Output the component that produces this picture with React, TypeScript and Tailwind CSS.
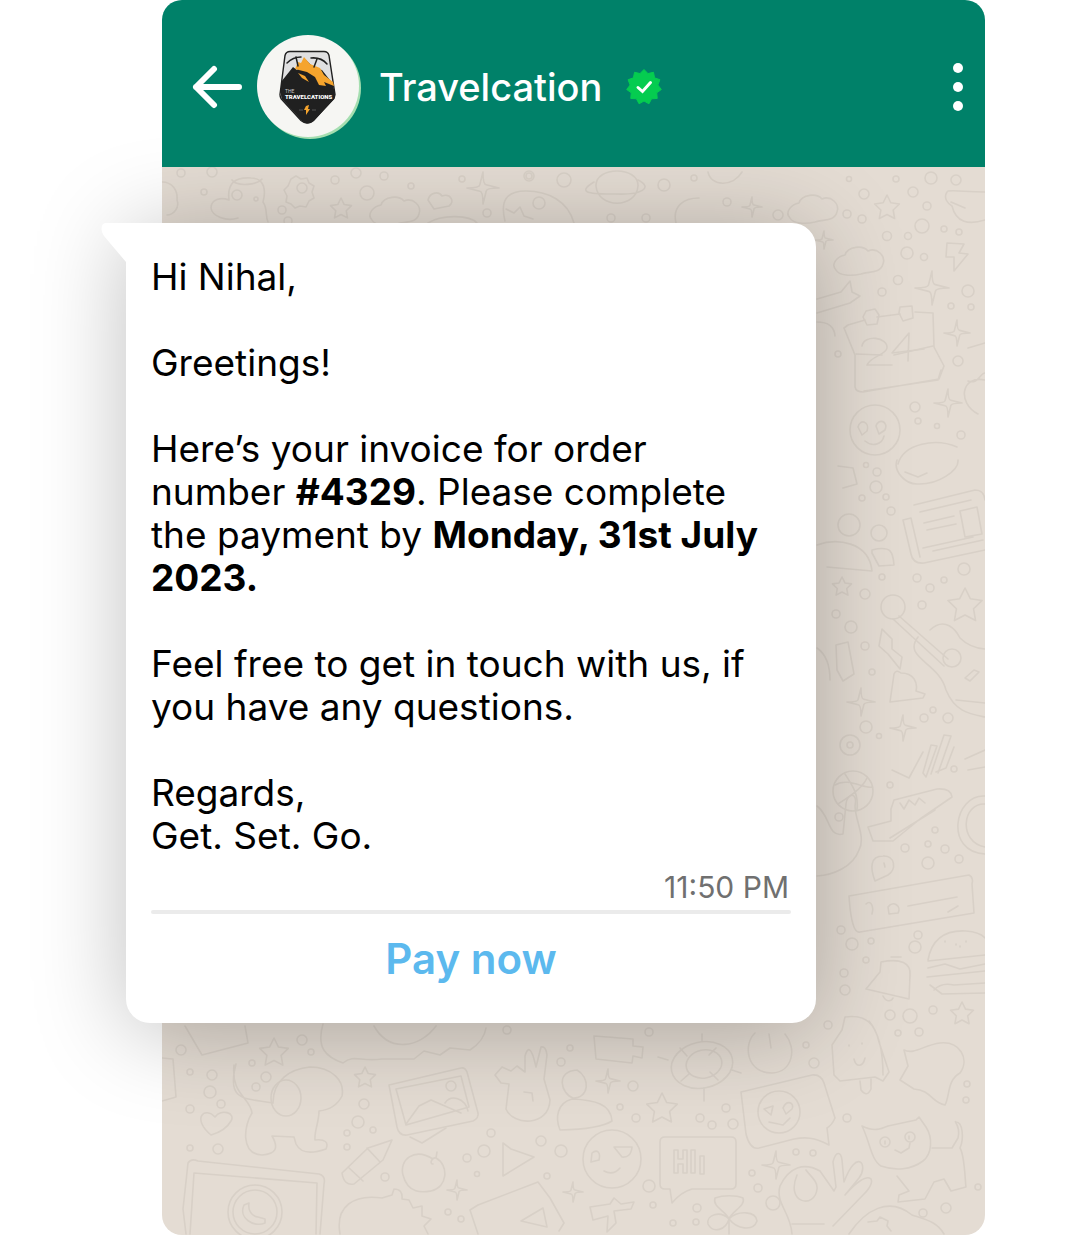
import type { ReactNode } from "react";

function Star({ x, y, r = 12 }: { x: number; y: number; r?: number }) {
  const points = Array.from({ length: 10 }, (_, i) => {
    const a = (Math.PI / 5) * i - Math.PI / 2;
    const d = i % 2 ? r * 0.5 : r;
    return `${x + d * Math.cos(a)},${y + d * Math.sin(a)}`;
  });
  return <polygon points={points.join(" ")} />;
}

function Sparkle({ x, y, r = 14 }: { x: number; y: number; r?: number }) {
  const n = r / 5;
  return (
    <path
      d={`M${x} ${y - r}Q${x} ${y - n} ${x + n} ${y - n}L${x + r} ${y}Q${x + n} ${y} ${x + n} ${y + n}L${x} ${y + r}Q${x} ${y + n} ${x - n} ${y + n}L${x - r} ${y}Q${x - n} ${y} ${x - n} ${y - n}Z`}
    />
  );
}

function Cloud({ x, y }: { x: number; y: number }) {
  return (
    <path d={`M${x} ${y + 18}c-6-6 2-14 9-15c3-9 18-10 23-4c9-4 18 5 15 13c-3 10-14 7-22 10c-9 2-22 2-25-4Z`} />
  );
}

const dots = [
  [849, 179, 2.5], [896, 179, 3], [931, 178, 6], [956, 180, 5], [864, 194, 5], [913, 192, 5], [927, 206, 4], [847, 214, 4],
  [862, 219, 4], [922, 226, 7], [944, 229, 3], [959, 232, 3], [887, 236, 4.5], [908, 236, 3.5], [907, 253, 6], [924, 257, 3.5],
  [898, 280, 4.5], [882, 292, 4], [968, 291, 6], [951, 306, 3], [971, 307, 3], [958, 361, 5], [838, 354, 3], [915, 407, 5],
  [918, 421, 3], [937, 426, 2.5], [961, 435, 4], [866, 465, 2.5], [877, 472, 4], [876, 487, 6], [862, 498, 3], [886, 497, 3],
  [891, 511, 4], [849, 525, 11], [879, 533, 8], [882, 577, 3], [917, 578, 4], [930, 588, 4], [944, 580, 3], [964, 569, 6],
  [922, 605, 4], [836, 614, 4], [851, 627, 6], [865, 594, 5], [865, 646, 4], [872, 672, 3], [933, 710, 3], [924, 718, 4],
  [948, 718, 5], [866, 727, 6], [879, 736, 2.5], [890, 785, 3], [954, 769, 3], [839, 817, 4], [935, 830, 3], [928, 844, 3],
  [905, 848, 4], [945, 849, 4], [928, 863, 6], [959, 859, 4], [918, 935, 4], [841, 930, 4], [852, 944, 6], [871, 941, 3],
  [915, 947, 6], [866, 960, 3], [844, 973, 4], [845, 990, 5], [890, 1015, 5], [910, 1016, 7], [933, 1010, 4], [898, 1033, 3],
  [919, 1032, 4], [181, 1050, 5], [302, 1040, 5], [311, 1052, 3], [190, 1072, 3], [212, 1075, 5], [252, 1063, 3], [266, 1077, 5],
  [256, 1087, 4], [210, 1092, 6], [221, 1104, 4], [190, 1109, 4], [190, 1148, 3], [218, 1149, 5], [347, 1133, 3], [358, 1122, 6],
  [364, 1104, 5], [373, 1130, 3], [347, 1147, 3], [385, 1177, 4], [467, 1158, 4], [484, 1151, 6], [491, 1133, 4], [541, 1141, 5],
  [561, 1151, 6], [477, 1174, 2.5], [547, 1176, 3], [448, 1212, 3], [461, 1219, 3], [507, 1030, 4], [561, 1062, 4], [570, 1048, 3],
  [649, 1032, 4], [633, 1086, 5], [620, 1107, 3], [636, 1118, 4], [700, 1118, 4], [712, 1125, 4], [726, 1108, 4], [733, 1124, 5],
  [806, 1045, 3], [814, 1063, 5], [828, 1025, 4], [847, 1118, 4], [796, 1152, 3], [813, 1153, 3], [752, 1173, 3], [758, 1188, 4],
  [773, 1203, 7], [649, 1186, 6], [653, 1205, 3], [697, 1208, 4], [673, 1223, 3], [696, 1222, 3], [946, 1208, 5], [923, 1213, 4],
  [967, 1084, 3], [966, 1100, 3], [978, 1187, 3], [181, 173, 4], [212, 172, 5], [204, 192, 3], [335, 180, 4], [367, 193, 7],
  [282, 210, 4], [288, 221, 4], [356, 173, 5], [384, 176, 4], [411, 186, 3], [462, 179, 3], [529, 176, 5], [564, 180, 7],
  [487, 213, 4], [529, 176, 3], [664, 185, 6], [694, 178, 3], [611, 218, 4], [646, 218, 4], [727, 202, 4], [778, 215, 5],
];

function Doodles() {
  return (
    <svg
      aria-hidden="true"
      className="absolute inset-0 h-full w-full"
      viewBox="162 167 823 1069"
      preserveAspectRatio="xMidYMin slice"
      fill="none"
      stroke="#d8d0c7"
      strokeWidth="1.6"
      strokeLinecap="round"
      strokeLinejoin="round"
    >
      {dots.map(([x, y, r], i) => (
        <circle key={i} cx={x} cy={y} r={r} />
      ))}

      <Star x={887} y={208} r={13} />
      <Star x={842} y={587} r={10} />
      <Star x={965} y={606} r={18} />
      <Star x={962} y={1014} r={12} />
      <Star x={274} y={1053} r={15} />
      <Star x={365} y={1078} r={11} />
      <Star x={662} y={1109} r={16} />
      <Star x={341} y={209} r={11} />
      <Sparkle x={932} y={288} r={17} />
      <Sparkle x={957} y={333} r={13} />
      <Sparkle x={948} y={403} r={14} />
      <Sparkle x={861} y={702} r={14} />
      <Sparkle x={903} y={728} r={13} />
      <Sparkle x={457} y={1190} r={10} />
      <Sparkle x={573} y={1192} r={10} />
      <Sparkle x={776} y={1165} r={14} />
      <Sparkle x={608} y={1081} r={12} />
      <Sparkle x={483} y={188} r={16} />
      <Sparkle x={752} y={207} r={10} />
      <Sparkle x={824} y={240} r={9} />
      <Cloud x={836} y={252} />
      <Cloud x={790} y={200} />
      <Cloud x={372} y={202} />

      {/* face, gear, planet and pizza along the top */}
      <path d="M238 218c-12 4-26-2-27-10c0-9 10-11 18-8c-2-16 5-23 22-22c14 0 15 13 12 24c5 7 2 14 5 20M232 180c5 7 25 5 30-1" />
      <circle cx="237" cy="195" r="5" />
      <circle cx="256" cy="199" r="2" />
      <path d="m291 179 5-3 5 3 6-1 2 5 5 3-2 6 2 6-5 3-3 6-6-1-5 2-4-4-5-2 1-6-3-6 4-4Z" />
      <circle cx="302" cy="188" r="5" />
      <path d="M162 182c10 0 16 8 15 18 3 8-4 15-10 15M428 200c2-8 11-9 14-4c9-3 13 6 7 10l-15 3ZM505 221c-5-20 1-30 21-30c22 0 42 10 48 32M506 209l8 4 6-6 4 9 9 3" />
      <circle cx="539" cy="203" r="6" />
      <path d="M596 186c-1-20 43-20 42 0c-2 23-40 23-42 0M594 182c-20 12 0 12 22 12c25 1 38-6 22-14M676 223c-4-17 8-25 23-25M708 172c3 15 25 15 34 0M428 223c14-9 42-8 49 0" />
      <path d="M947 192c-4 6 1 12 5 14c4 17 17 19 33 14M948 191c9-1 18 1 37 1M951 202l14 6M947 243l17 1-5 9 9 1-14 17 0-14-8 0Z" />

      {/* desk calendar */}
      <path d="M865 320l-17 5-4 3 11 27v32q1 5 8 5l76-13 5-13-10-19-1-34-18-1M877 317l23-3M864 391l74-11 3-10" />
      <path d="M866 311l9-2 4 6-2 9-10 1-4-8ZM900 307l12-1 1 12-10 3-4-8ZM856 354l26 1m12 0 39-9" />
      <path d="M862 346c2-12 26-9 25 2-1 7-16 8-20 17h25M892 353l17-20-1 28M892 353l32-4" />
      <circle cx="875" cy="430" r="25" />
      <path d="M858 427c2-9 12-5 9 4l-5 4ZM876 426c2-8 13-5 9 4l-6 4ZM865 441c7 6 17 4 19-5M985 380c-24-5-28 23-7 34M898 464c6-21 38-26 59-17M968 348l17-5m-17 38c10 4 12-8 17-8M817 299l24-7 9-11 2 11 8 4-10 7-33 10M817 322q17 0 18 14" />

      {/* newspaper */}
      <path d="M914 505l61-15q9 0 10 10m0 50-61 13q-11 1-13-9l-8-34 8-2 9 39M920 512l51-12m-47 23 30-7m-27 14 29-6m-23 27 50-11M923 548l50-11M960 511l17-4 5 27-17 3Z" />
      <path d="M897 460c-4 11 8 24 20 24c22 1 42-14 41-24M905 472l13 5 9-4M817 545c19-7 52-4 55 26l-45-4M872 550c20-5 21 3 22 15l-15 1-7-13ZM838 466l15 2 4 16-14 4" />

      {/* guitar */}
      <circle cx="893" cy="607" r="12" />
      <path d="M899 616l49 43m-55-40 51 47M930 630c15-14 26 0 30 8q10 10 25 11M918 637c-16 21 21 25 28 53c9 22 24 24 39 27M956 700l29 3" />
      <circle cx="952" cy="658" r="9" />
      <path d="M965 678l9-8 5 2-9 9Z" />
      <path d="m882 629 10 10 0 10 10 8-2 12-12-15-9-8ZM836 645l12-3 6 32-11 7-6-11ZM890 702l4-28q2-5 7-1c13 0 17 10 15 18l9 3-2 4ZM817 648q13 9 13 32M923 773l8-28 6 1-11 31ZM938 773l13-37-7-1-13 39" />
      <circle cx="850" cy="745" r="10" />
      <circle cx="850" cy="745" r="3" />
      <path d="M892 770l17 8 14-26m13 20 10-4 8-21M965 759l20-9m-17 20 17-3" />

      {/* ball, knife and clock */}
      <circle cx="853" cy="791" r="20" />
      <path d="M835 785c12-8 30 4 37 2M845 774c7 11 14 20 12 36M867 778c-5 11-20 20-29 26M891 809l3-9 43-11q14-1 15 8l-32 22-27 22-20 0-5-14 23-6ZM900 803l4 6 5-9 6 5 4-7 6 5M890 838l45-28" />
      <path d="M985 796c-31-2-41 56 0 58M985 804c-23-1-27 38 0 43M817 806c13 9 11 32 26 28l3-30c1-11 12-13 9 2c0 14 11 31 4 44c-6 17-26 25-42 26" />
      <path d="M875 881c-5-13-5-25 8-25c12-1 14 14 5 19ZM884 863l1 4M849 896l120-21q5 3 3 9l2 29-114 19q-7 2-10-24ZM866 904c5-5 8 3 6 10m16-7c5-7 14-1 10 6l-9 1ZM908 906l49-9M948 912l10-6" />

      {/* burger and bell */}
      <path d="M928 960c4-22 18-30 38-29q14 1 19 7M928 961l57-6M928 968l17-4 15 5 25-5M927 977l58-6M930 985l12 9 43-1M934 990q7-8 20-5l31-2M945 941v1m11 2v1m10-4v1m-6 4v1" />
      <path d="m866 989 14-17 1-10c20-4 30 1 29 13l-1 24ZM883 996c3 6 8 6 10 2M891 957h10" />

      {/* ice cream, ghost, cat and hand */}
      <path d="m834 1075-2-30 10-15 3-13c22-3 30 8 34 25l10 30-6 9-8-4-35 4ZM869 1021c13 15 14 40 14 54M860 1081l1 9q6 8 10-1l0-10M854 1059c2 9 9 8 11-1M849 1045v1m13-3v1M904 1050c10 5 20-5 36-7c20-2 30 16 20 30c-13 7-10 23-15 32c-13-2-14-15-31-16l-14-9 8-14Z" />
      <path d="M862 1126c12 6 19 3 26 0l28-6 3-3 7 10c7 11 6 27-3 34c-12 9-28 10-42 5c-10-6-11-24-19-40ZM932 1148h20l6-10c3-12-5-18-2-16c7 0 8 17 4 26c5 8 5 34 6 39l-15 4-7-12-10 3-9 17-27 3 1-7 10-4-12-15M885 1141v3m24-8v3m-14 11 6 3 8-5 1-5" />
      <circle cx="885" cy="1142" r="5" />
      <circle cx="910" cy="1137" r="5" />
      <path d="M792 1234c-1-21-17-31-12-48c9-19 24-24 40-15l14 20 2-4-3-25c3-12 8-10 9-2l2 22c13-35 25-17 15-4l-14 17c24-28 35-17 19-1l-31 32M792 1224h32M797 1175c-12 29 18 34 20 14c1-8-7-13-11-19M849 1234c16-24 40-38 63-19c15 5 25 7 32 19M868 1222l9-1 3-4 8 4-1 5 4 5" />

      {/* chat bubbles, life ring and emoji */}
      <path d="M741 1092l71-17q9-1 12 8l11 35q-3 7-8 10l2 17c-15-8-24-8-35-6l-35 9q-9 2-13-14Z" />
      <circle cx="779" cy="1112" r="21" />
      <path d="M764 1109l9-3-2 9ZM783 1108c4-9 12-5 9 1l-6 5ZM769 1122l14 3 7-7" />
      <path d="M665 1137h66q5 0 5 5v42q0 5-5 5h-39q-11 3-20 14l-2-14h-5q-5 0-5-5v-42q0-5 5-5Z" />
      <path d="M674 1150v23h4v-9h5v9h4v-23h-4v9h-5v-9ZM691 1150h4v23h-4ZM700 1156h4v18h-4Z" />
      <circle cx="612" cy="1159" r="29" />
      <path d="M592 1153c5-4 9-1 7 7l-8 2ZM614 1147l18 0q-1 11-10 10ZM604 1171q9 5 16-3" />
      <ellipse cx="702" cy="1065" rx="31" ry="23" transform="rotate(-12 702 1065)" />
      <ellipse cx="704" cy="1064" rx="18" ry="14" transform="rotate(-12 704 1064)" />
      <path d="M702 1041v-7m2 54v13m-36-41-10-3m74 13 9 3M680 1048l7 8m29-8-7 7m-28 26 8-7m29 6-8-8M594 1036l39 3v7l10 1-1 11-9-2-1 7-36-4Z" />
      <path d="M755 1033c-12 11-9 40 17 40c21-1 25-25 13-39M769 1034l2 14M590 1207l20-3 4-6 7 6 13-2-3 7-17 2 2 12-9 9 1-16-15 4Z" />
      <path d="M729 1219c-3-8-17-12-14-21c8-3 21-3 28 0c3 8-11 13-14 21c-9-9-23-4-21 5c5 10 18 6 21-5c9-9 27-8 28 2c-4 11-20 8-28-2v15" />

      {/* dog, heart and laptop */}
      <path d="M236 1064c-10 38 9 34 37 39c0-23 17-34 37-36c22 0 35 14 32 29c-5 10-14 14-23 15c0 11-5 21-4 29c10-1 14 2 11 9c-17 6-26 3-30-5l-2-7-22-1c7 12 4 18-10 19c-22-1-18-30-10-42c-2-16-21-18-18-48" />
      <ellipse cx="286" cy="1098" rx="15" ry="18" />
      <path d="M211 1135c-20-17-6-29 4-18c6-9 21-4 16 4c-5 9-13 12-20 14ZM186 1234l-3-25 5-46q3-5 10-2l121 13q7 2 5 10l-4 50M190 1234l4-61 123 10-1 51" />
      <circle cx="255" cy="1212" r="27" />
      <circle cx="255" cy="1212" r="22" />
      <path d="M244 1205c-6 13 10 23 21 18v-4l-7-2c-8-1-10-9-9-14ZM162 1058l11 1 3 38-14 4M185 1026l17 29 46-12-3-17M323 1024c-7 24 3 33 20 39c11-9 17-1 39-4h32l10-8 16 4 10-7 20 2q14-9 16-22M374 1026c15 27 46 22 62 0" />

      {/* picture frame, pencil, apple and dinosaur */}
      <path d="M389 1085l72-17q4-1 6 4l11 41q1 5-5 8l-66 14q-8 1-10-8ZM396 1089l65-13 8 31-63 18ZM406 1124l13-18 12-6 30 13M445 1103c6-9 20-5 23 8M342 1173l26-25 24-8-9 20-29 24q-10 2-12-11ZM348 1167l15 14m4-33 13 14" />
      <circle cx="451" cy="1086" r="5" />
      <path d="M433 1159c-19-12-34 1-30 16c5 20 21 17 28 16c17-4 18-26 5-33c-4-1-7 6-3 6M436 1158l1-6M410 1137l12 6 24-15M340 1234c-5-28 14-40 42-36l10-3 2-6q9 0 8 10l7 1 4 8 9-2 0 10 9 3-7 7 4 8" />
      <path d="m503 1143 0 33 31-19-23-8ZM478 1234l-8-24 8-5 60-23 12 16 14 25-5 8M521 1221l22-13 4 19ZM509 1084l-8-1-6-8 7-8 9 4 6-5 8 6 0-16q4-14 9 3l2 8 5-20q5-1 6 8l-3 24 6 21c-1 27-37 26-44 9ZM524 1092l8 1 1 8" />
      <path d="M577 1070c-22 1-16 24-4 28c17 0 17-21 4-28M572 1099c-15 4-17 19-12 31q40-1 52-9c-1-17-17-21-40-22" />
    </svg>
  );
}

function TravelLogo() {
  return (
    <svg role="img" aria-label="The Travelcations" className="h-[104px] w-[104px] shrink-0" viewBox="257 35 104 104">
      <circle cx="310" cy="88" r="51" fill="#a5deb0" />
      <circle cx="308" cy="86" r="51" fill="#f6f6f3" />
      <path d="M290 51.5h34q4 0 5 4l6 39-1 4-21 22q-6 5-12 0l-20-22q-1-2-1-4l5-39q1-4 5-4Z" fill="#e0e0e1" stroke="#202020" strokeWidth="1.4" />
      <path d="m281 82 12-15 4 3 9-10 8 8 8 2 11 14 2 11-1 4-20 22q-6 5-12 0l-20-22q-1-2-1-4Z" fill="#202020" />
      <path d="m304 57 6 7 10 4 4 7 9 7 1 4-10-4 2 4-7-1-4-8-8-5-12-3 3-7 3 1Z" fill="#f5a42d" />
      <path d="m298 73 7 3 4 6-7-4Z" fill="#f5a42d" />
      <path d="M287 63q6-6 14-6m-5 0 2 9m13-8q10-1 16 6m-10-5-3 8" fill="none" stroke="#202020" strokeWidth="1.5" strokeLinecap="round" />
      <text x="285" y="93" fill="#c9c9c9" fontFamily="Roboto, sans-serif" fontSize="5">THE</text>
      <text x="285" y="98.5" fill="#fff" fontFamily="Roboto, sans-serif" fontSize="6" fontWeight="900">TRAVELCATIONS</text>
      <path d="m306 106 3-1-1 4 2 0-4 6 0-5-2 0Z" fill="#f5a42d" />
      <path d="M299 110h4m9 0h4" stroke="#555" strokeWidth="1" />
    </svg>
  );
}

function VerifiedBadge() {
  const points = Array.from({ length: 22 }, (_, i) => {
    const a = (Math.PI / 11) * i - Math.PI / 2;
    const d = i % 2 ? 14 : 17.5;
    return `${18 + d * Math.cos(a)},${18 + d * Math.sin(a)}`;
  });
  return (
    <svg role="img" aria-label="Verified" className="h-9 w-9 shrink-0" viewBox="0 0 36 36">
      <polygon points={points.join(" ")} fill="#05cc50" stroke="#05cc50" strokeLinejoin="round" />
      <path d="m12 18.5 4.5 4 8-9" fill="none" stroke="#fff" strokeWidth="3" strokeLinecap="round" />
    </svg>
  );
}

function Paragraph({ children }: { children: ReactNode }) {
  return <p className="whitespace-nowrap">{children}</p>;
}

export default function App() {
  return (
    <main className="bg-white pr-[95px] pl-[162px] font-['Inter',sans-serif]">
      <header className="relative z-10 flex h-[167px] items-center rounded-t-[20px] bg-[#008169] pt-1.5 pr-[19px] pl-[30px] text-white">
        <button type="button" aria-label="Back" className="mr-[15px] shrink-0">
          <svg className="h-[50px] w-[50px]" viewBox="0 0 50 50" fill="none" stroke="currentColor" strokeWidth="6" strokeLinecap="round" strokeLinejoin="round">
            <path d="M47 25H4M22 7 4 25l18 18" />
          </svg>
        </button>
        <TravelLogo />
        <h1 className="mr-6 ml-[18px] text-[38px] leading-[44px] font-medium">Travelcation</h1>
        <VerifiedBadge />
        <button type="button" aria-label="Menu" className="ml-auto">
          <svg className="h-[50px] w-4" viewBox="0 0 16 50" fill="currentColor">
            <circle cx="8" cy="6" r="5" />
            <circle cx="8" cy="25" r="5" />
            <circle cx="8" cy="44" r="5" />
          </svg>
        </button>
      </header>

      <section className="relative rounded-b-[20px] bg-[#e4dcd3] pt-14 pr-[169px] pb-[212px]">
        <div className="absolute inset-0 overflow-hidden rounded-b-[20px]">
          <Doodles />
        </div>
        <article className="relative -ml-9 rounded-[24px] rounded-tl-none bg-white px-[25px] pt-8 pb-[38px] shadow-[0_8px_92px_rgba(0,0,0,0.25)]">
          <svg aria-hidden="true" className="absolute top-0 -left-[25px] h-10 w-[26px]" viewBox="0 0 26 40" fill="#fff">
            <path d="M26 0H5C0 0-1 7 3 13l22 26h1Z" />
          </svg>
          <div className="space-y-[43px] text-[37px] leading-[43px] text-black">
            <Paragraph>Hi Nihal,</Paragraph>
            <Paragraph>Greetings!</Paragraph>
            <Paragraph>
              Here’s your invoice for order
              <br />
              number <strong className="font-bold">#4329</strong>. Please complete
              <br />
              the payment by <strong className="font-bold">Monday, 31st July</strong>
              <br />
              <strong className="font-bold">2023.</strong>
            </Paragraph>
            <Paragraph>
              Feel free to get in touch with us, if
              <br />
              you have any questions.
            </Paragraph>
            <Paragraph>
              Regards,
              <br />
              Get. Set. Go.
            </Paragraph>
          </div>
          <time className="mt-3 block pr-0.5 text-right text-[30px] leading-9 text-[#707070]">11:50 PM</time>
          <hr className="mt-[5px] rounded-full border-t-4 border-[#ebebeb]" />
          <button type="button" className="mt-[19px] block w-full text-center text-[42px] leading-[52px] font-semibold text-[#5cb9ee]">
            Pay now
          </button>
        </article>
      </section>
    </main>
  );
}
